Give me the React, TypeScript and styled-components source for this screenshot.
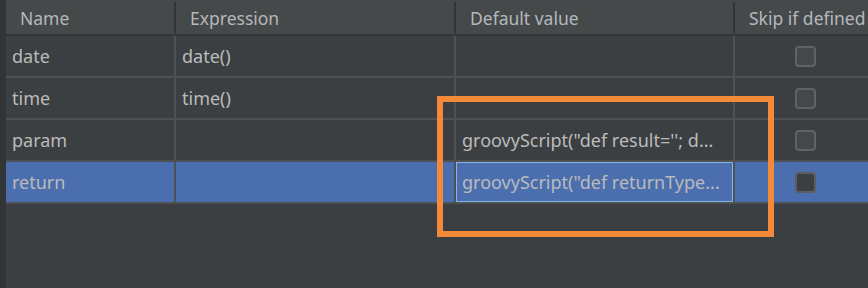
import React from "react";
import styled, { createGlobalStyle } from "styled-components";

const GlobalStyle = createGlobalStyle`
  html, body {
    margin: 0;
    padding: 0;
    background: #3c3f41;
  }
  body {
    font-family: "Noto Sans", "Open Sans", sans-serif;
    color: #bbbbbb;
  }
`;

type Row = {
  name: string;
  expression: string;
  value: string;
};

const rows: Row[] = [
  { name: "date", expression: "date()", value: "" },
  { name: "time", expression: "time()", value: "" },
  { name: "param", expression: "", value: "groovyScript(\"def result=''; d..." },
  { name: "return", expression: "", value: "groovyScript(\"def returnType..." },
];

const App = () => {
  return (
    <>
      <GlobalStyle />
      <Page>
        <Gutter />
        <Table>
          <HeaderRow>
            <HeadCell>Name</HeadCell>
            <HeadCell>Expression</HeadCell>
            <HeadCell>Default value</HeadCell>
            <HeadCell $last>Skip if defined</HeadCell>
          </HeaderRow>
          {rows.map((r, i) => {
            const selected = i === rows.length - 1;
            return (
              <BodyRow key={r.name} $selected={selected}>
                <Cell>{r.name}</Cell>
                <Cell>{r.expression}</Cell>
                <Cell>{selected ? <Editor>{r.value}</Editor> : r.value}</Cell>
                <CheckCell>
                  <CheckBox $selected={selected} />
                </CheckCell>
              </BodyRow>
            );
          })}
        </Table>
        <Highlight />
      </Page>
    </>
  );
};

/*-----------Styles----------------*/
const Page = styled.div`
  position: relative;
  display: flex;
  width: 868px;
  height: 288px;
  overflow: hidden;
  background: #3c3f41;
`;

const Gutter = styled.div`
  width: 6px;
  flex-shrink: 0;
  background: #323436;
`;

const Table = styled.div`
  flex: 1;
  display: flex;
  flex-direction: column;
  min-width: 0;
`;

const columns = "170px 280px 279px 1fr";

const HeaderRow = styled.div`
  display: grid;
  grid-template-columns: ${columns};
  height: 34px;
  background: #45494a;
  border-bottom: 2px solid #323436;
`;

const HeadCell = styled.div<{ $last?: boolean }>`
  display: flex;
  align-items: center;
  padding-left: 14px;
  font-size: 17.5px;
  white-space: nowrap;
  overflow: hidden;
  color: #b4b8bc;
  border-right: ${(p) => (p.$last ? "none" : "2px solid #323436")};
  margin: 2px 0 1px;
`;

const BodyRow = styled.div<{ $selected?: boolean }>`
  display: grid;
  grid-template-columns: ${columns};
  height: 40px;
  background: ${(p) => (p.$selected ? "#4b6eaf" : "#3c3f41")};
  border-bottom: 2px solid #4e5153;
`;

const Cell = styled.div`
  display: flex;
  align-items: center;
  padding-left: 6px;
  font-size: 18px;
  white-space: nowrap;
  overflow: hidden;
  border-right: 2px solid #4e5153;
`;

const Editor = styled.div`
  display: flex;
  align-items: center;
  box-sizing: border-box;
  margin-left: -6px;
  padding-left: 5px;
  width: calc(100% + 6px);
  height: 100%;
  border: 1px solid #84b7e8;
  background: #4b6eaf;
  white-space: nowrap;
  overflow: hidden;
`;

const CheckCell = styled.div`
  display: flex;
  align-items: center;
  padding-left: 60px;
`;

const CheckBox = styled.div<{ $selected?: boolean }>`
  box-sizing: border-box;
  width: 21px;
  height: 21px;
  border-radius: 4px;
  border: 2px solid ${(p) => (p.$selected ? "#5b5e60" : "#5f6365")};
  background: ${(p) => (p.$selected ? "#3c3f41" : "#43494a")};
`;

const Highlight = styled.div`
  position: absolute;
  left: 437px;
  top: 96px;
  width: 337px;
  height: 141px;
  box-sizing: border-box;
  border: 6px solid #f5893a;
  pointer-events: none;
`;

export default App;
